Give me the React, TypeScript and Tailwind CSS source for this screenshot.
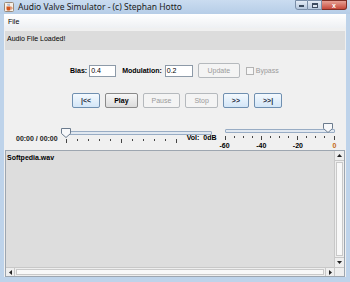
import React from "react";

const timeTicks = Array.from({ length: 11 }, (_, i) => i);
const volTicks = Array.from({ length: 13 }, (_, i) => i);

function CupIcon() {
  return (
    <svg width="10" height="10" viewBox="0 0 10 10" className="ml-[4px] shrink-0">
      <rect x="0.5" y="0.5" width="9" height="9" rx="1" fill="#f6efe6" stroke="#9a8a78" />
      <path d="M2.5 4.5h4v2.5a1.5 1.5 0 0 1-1.5 1.5h-1a1.5 1.5 0 0 1-1.5-1.5z" fill="#d2561e" />
      <path d="M6.5 5.2h0.8a0.9 0.9 0 0 1 0 1.8h-0.8" fill="none" stroke="#d2561e" strokeWidth="0.7" />
      <path d="M4 1.8c-0.6 0.7 0.6 1.2 0 2M5.3 1.8c-0.6 0.7 0.6 1.2 0 2" fill="none" stroke="#3b6fb4" strokeWidth="0.6" />
    </svg>
  );
}

function TitleBar() {
  return (
    <div className="h-[14px] flex items-center bg-linear-to-b from-[#cadcf0] to-[#b6cde7]">
      <CupIcon />
      <span className="ml-[4px] text-[8.5px] leading-none text-[#1b1b1b] font-['Noto_Sans',sans-serif] whitespace-nowrap">
        Audio Valve Simulator - (c) Stephan Hotto
      </span>
      <div className="ml-auto mr-[3px] self-start flex">
        <div className="w-[13px] h-[10px] rounded-bl-[3px] border border-[#7a8ea8] bg-linear-to-b from-[#e4ecf6] to-[#b4c6dc] flex items-end justify-center pb-[2px]">
          <div className="w-[5px] h-[2px] bg-white border-[0.5px] border-[#3c4c60]" />
        </div>
        <div className="w-[14px] h-[10px] border-y border-r border-[#7a8ea8] bg-linear-to-b from-[#e4ecf6] to-[#b4c6dc] flex items-center justify-center">
          <div className="w-[6px] h-[5px] border border-[#3c4c60] border-t-2 bg-white/40" />
        </div>
        <div className="w-[25px] h-[10px] rounded-br-[3px] border-y border-r border-[#7f2f26] bg-linear-to-b from-[#e6a095] to-[#c5473a] flex items-center justify-center">
          <span className="text-[7px] leading-none font-bold text-white font-['Liberation_Sans',sans-serif]">x</span>
        </div>
      </div>
    </div>
  );
}

function JButton({ label, enabled, blue, bold }: { label: string; enabled: boolean; blue?: boolean; bold?: boolean }) {
  const look = !enabled
    ? "border-[#b5b9bd] bg-[#f4f4f4] text-[#9a9a9a]"
    : blue
      ? "border-[#6f8fb0] bg-linear-to-b from-[#f4f9fe] to-[#d3e6f7] text-[#1c2a3a]"
      : "border-[#8a8a8a] bg-linear-to-b from-[#f7f7f7] to-[#dcdcdc] text-black";
  return (
    <div
      className={`h-[15px] px-[8px] flex items-center justify-center border rounded-[2px] text-[7px] leading-none whitespace-nowrap ${bold ? "font-bold" : ""} ${look}`}
    >
      {label}
    </div>
  );
}

function Thumb() {
  return (
    <svg width="10" height="10" viewBox="0 0 10 10">
      <polygon points="0.5,0.5 9.5,0.5 9.5,5.5 5,9.5 0.5,5.5" fill="#f7f8fa" stroke="#6b7b8d" />
    </svg>
  );
}

function Track({ w }: { w: number }) {
  return (
    <div
      className="h-[4px] border border-[#98acc4] bg-[#e1e8f0] rounded-[1px]"
      style={{ width: w }}
    />
  );
}

export default function App() {
  return (
    <div className="w-[350px] h-[282px] overflow-hidden bg-[#bed3ea] flex flex-col font-['Liberation_Sans',Arial,sans-serif] text-black">
      <TitleBar />
      <div className="flex-1 mx-[4px] mb-[5px] bg-[#f0f0f0] flex flex-col min-h-0">
        {/* menu */}
        <div className="h-[14px] shrink-0 bg-linear-to-b from-[#ffffff] to-[#eef0f3] flex items-center">
          <span className="ml-[4px] text-[7px] leading-none">File</span>
        </div>

        {/* status */}
        <div className="mt-[3px] mx-[1px] h-[19px] shrink-0 bg-[#dcdcdc] px-[2px] pt-[4px]">
          <span className="text-[7px] leading-none block">Audio File Loaded!</span>
        </div>

        {/* bias row */}
        <div className="mt-[13px] h-[15px] shrink-0 flex items-center pl-[66px] text-[7px] leading-none">
          <span className="font-bold">Bias:</span>
          <div className="ml-[2px] w-[27px] h-[12px] bg-white border border-[#8d9aa8] flex items-center px-[1px]">0.4</div>
          <span className="ml-[6px] font-bold">Modulation:</span>
          <div className="ml-[3px] w-[28px] h-[12px] bg-white border border-[#8d9aa8] flex items-center px-[1px]">0.2</div>
          <div className="ml-[5px] w-[42px]">
            <JButton label="Update" enabled={false} />
          </div>
          <div className="ml-[6px] w-[8px] h-[8px] border border-[#b3b3b3] bg-[#f6f6f6]" />
          <span className="ml-[2px] text-[#9a9a9a]">Bypass</span>
        </div>

        {/* transport row */}
        <div className="mt-[15px] h-[15px] shrink-0 flex items-center gap-[5px] pl-[68px]">
          <JButton label="|<<" enabled blue bold />
          <JButton label="Play" enabled bold />
          <JButton label="Pause" enabled={false} />
          <JButton label="Stop" enabled={false} />
          <JButton label=">>" enabled blue bold />
          <JButton label=">>|" enabled blue bold />
        </div>

        {/* sliders */}
        <div className="mt-[15px] h-[27px] shrink-0 flex items-start text-[7px] leading-none font-bold">
          <span className="ml-[12px] mt-[12px] text-[#222] whitespace-nowrap">00:00 / 00:00</span>
          <div className="relative ml-[3px] w-[152px] h-full">
            <div className="absolute left-0 top-[5px]">
              <Thumb />
            </div>
            <div className="ml-[5px] mt-[8px]">
              <Track w={146} />
            </div>
            <div className="ml-[5px] mt-[4px] w-[111px] flex justify-between items-start">
              {timeTicks.map((i) => (
                <div key={i} className={`w-px bg-[#444] ${i % 5 === 0 ? "h-[4px]" : "h-[2px]"}`} />
              ))}
            </div>
          </div>
          <span className="ml-[-26px] mt-[11px] whitespace-nowrap">Vol:</span>
          <span className="ml-[4px] mt-[11px] whitespace-nowrap">0dB</span>
          <div className="relative ml-[4px] w-[116px] h-full">
            <div className="absolute left-[102px] top-0">
              <Thumb />
            </div>
            <div className="ml-[4px] mt-[6px]">
              <Track w={110} />
            </div>
            <div className="ml-[4px] mt-[3px] w-[110px] flex justify-between items-start">
              {volTicks.map((i) => (
                <div key={i} className={`w-px bg-[#444] ${i % 4 === 0 ? "h-[4px]" : "h-[2px]"}`} />
              ))}
            </div>
            <div className="ml-[-3px] mt-[2px] w-[124px] flex justify-between">
              {["-60", "-40", "-20", "0"].map((t) => (
                <span key={t} className={`w-[14px] text-center ${t === "0" ? "text-[#c46a12]" : ""}`}>
                  {t}
                </span>
              ))}
            </div>
          </div>
        </div>

        {/* text area */}
        <div className="flex-1 min-h-0 mx-[1px] border border-[#9da6b0] flex flex-col">
          <div className="flex-1 min-h-0 flex">
            <div className="flex-1 bg-[#dddddd] px-[1px] pt-[3px]">
              <span className="text-[7px] leading-none font-bold block">Softpedia.wav</span>
            </div>
            <div className="w-[10px] bg-[#eeeeee] border-l border-[#c8c8c8] flex flex-col">
              <div className="h-[10px] flex items-center justify-center border-b border-[#c8c8c8]">
                <svg width="5" height="3" viewBox="0 0 5 3"><polygon points="2.5,0 5,3 0,3" fill="#222" /></svg>
              </div>
              <div className="flex-1 mx-[1px] my-[1px] bg-[#f8f8f8] border border-[#c9c9c9]" />
              <div className="h-[10px] flex items-center justify-center border-t border-[#c8c8c8]">
                <svg width="5" height="3" viewBox="0 0 5 3"><polygon points="0,0 5,0 2.5,3" fill="#222" /></svg>
              </div>
            </div>
          </div>
          <div className="h-[9px] shrink-0 flex border-t border-[#c8c8c8]">
            <div className="flex-1 flex bg-[#eeeeee]">
              <div className="w-[9px] flex items-center justify-center border-r border-[#c8c8c8]">
                <svg width="3" height="5" viewBox="0 0 3 5"><polygon points="0,2.5 3,0 3,5" fill="#222" /></svg>
              </div>
              <div className="flex-1 my-[1px] mx-[1px] bg-[#f8f8f8] border border-[#c9c9c9]" />
              <div className="w-[9px] flex items-center justify-center border-l border-[#c8c8c8]">
                <svg width="3" height="5" viewBox="0 0 3 5"><polygon points="0,0 3,2.5 0,5" fill="#222" /></svg>
              </div>
            </div>
            <div className="w-[10px] bg-[#eeeeee] border-l border-[#c8c8c8]" />
          </div>
        </div>
      </div>
    </div>
  );
}
